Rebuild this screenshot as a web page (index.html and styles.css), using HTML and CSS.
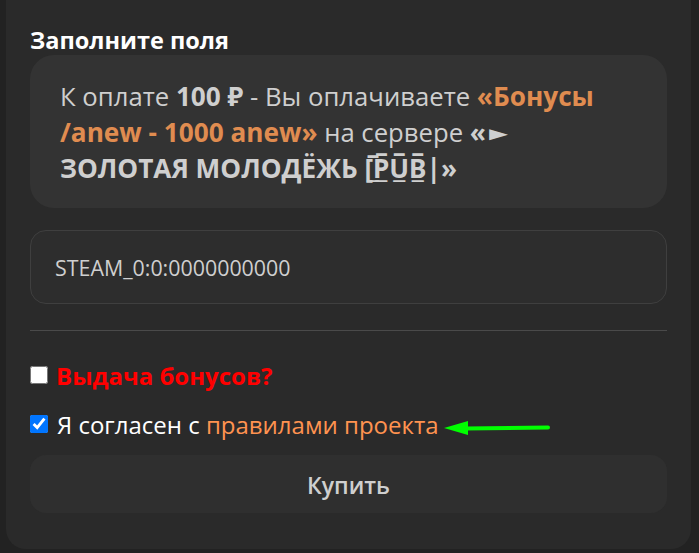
FILE: index.html
```html
<!DOCTYPE html>
<html lang="ru">
<head>
<meta charset="utf-8">
<title>Заполните поля</title>
<link rel="stylesheet" href="styles.css">
</head>
<body>
<main class="panel">
  <h2 class="title">Заполните поля</h2>
  <div class="summary">К оплате <b>100 ₽</b> - Вы оплачиваете <b class="accent">«Бонусы /anew - 1000 anew»</b> на сервере <b>«<span class="pointer">►</span><br>ЗОЛОТАЯ МОЛОДЁЖЬ [̲̅P̲̅U̲̅B̲̅|»</b></div>
  <div class="field">STEAM_0:0:0000000000</div>
  <hr class="divider">
  <label class="check check-bonus"><input type="checkbox"><span>Выдача бонусов?</span></label>
  <div class="check check-rules">
    <input type="checkbox" checked><span>Я согласен с <a class="rules" href="#">правилами проекта</a></span>
    <svg class="arrow" width="108" height="16" viewBox="0 0 108 16" aria-hidden="true"><path d="M1 8 L25 1 L25 15 Z" fill="#00ff00"/><path d="M22 8.6 L105 7.6" stroke="#00ff00" stroke-width="4" stroke-linecap="round" fill="none"/></svg>
  </div>
  <button class="buy" type="button">Купить</button>
</main>
</body>
</html>
```
FILE: styles.css
```css
* { box-sizing: border-box; }
html, body { margin: 0; height: 100%; }
body {
  background: #222222;
  padding: 0 8px 4px 6px;
  font-family: "Open Sans", "Noto Sans", sans-serif;
  overflow: hidden;
}
.panel {
  height: 549px;
  background: #2a2a2a;
  border-radius: 0 0 20px 20px;
  padding: 26px 24px 0;
  display: flex;
  flex-direction: column;
}
.title {
  margin: 0 0 1px;
  font-size: 23.5px;
  line-height: 28px;
  font-weight: 700;
  color: #ffffff;
}
.summary {
  background: #333333;
  border-radius: 24px;
  height: 153px;
  padding: 24px 30px;
  font-size: 25.7px;
  line-height: 36px;
  color: #cfcfcf;
}
.summary b { font-size: 26.2px; line-height: 1; }
.accent { color: #e08c50; }
.pointer {
  display: inline-block;
  margin-left: -3px;
  transform: scale(1.2, 0.7);
  transform-origin: left 56%;
}
.field {
  margin-top: 22px;
  height: 74px;
  border: 1px solid #3f3f3f;
  border-radius: 16px;
  background: #2d2d2d;
  padding: 0 24px;
  display: flex;
  align-items: center;
  font-size: 21.4px;
  color: #cfcfcf;
}
.divider {
  margin: 26px 0 0;
  border: 0;
  border-top: 1px solid #4a4a4a;
}
.check {
  display: flex;
  align-items: center;
  gap: 8px;
  height: 30px;
  font-size: 24px;
}
.check input {
  margin: 0;
  width: 18px;
  height: 18px;
  flex: none;
}
.check-bonus {
  margin-top: 29px;
  font-weight: 700;
  color: #ff0000;
}
.check-rules {
  margin-top: 19px;
  gap: 9px;
  color: #ffffff;
}
.rules {
  color: #ff9350;
  text-decoration: none;
}
.arrow { margin: 8px 0 0 -5px; flex: none; }
.buy {
  margin-top: 16px;
  height: 58px;
  border: 0;
  border-radius: 16px;
  padding: 1px 0 0;
  background: #2f2f2f;
  color: #cfcfcf;
  font-family: inherit;
  font-size: 23px;
  font-weight: 600;
}
```
